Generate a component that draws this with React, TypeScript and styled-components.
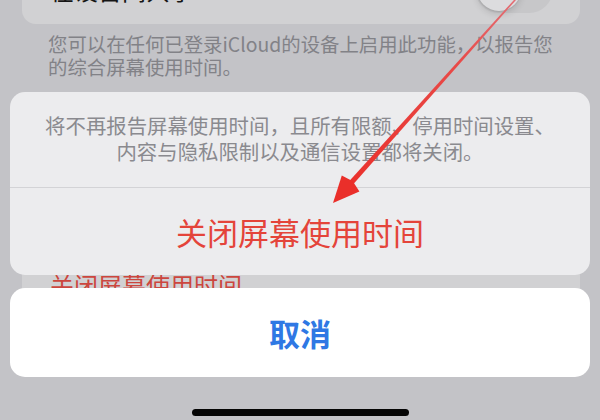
import React from "react";
import styled, { createGlobalStyle } from "styled-components";

const GlobalStyle = createGlobalStyle`
  html, body {
    margin: 0;
    padding: 0;
    width: 600px;
    height: 420px;
    overflow: hidden;
    background: #c3c3c7;
  }
  body {
    font-family: "Noto Sans CJK SC", "Noto Sans", sans-serif;
    -webkit-font-smoothing: antialiased;
  }
`;

const Screen = styled.div`
  position: relative;
  width: 600px;
  height: 420px;
  overflow: hidden;
  background: #c3c3c7;
`;

const Settings = styled.div`
  display: flex;
  flex-direction: column;
  padding: 0 20px 0 22px;
`;

const SettingsCard = styled.div<{ $offset: number; $height: number }>`
  display: flex;
  align-items: center;
  justify-content: space-between;
  box-sizing: border-box;
  height: ${(p) => p.$height}px;
  margin-top: ${(p) => p.$offset}px;
  padding: 0 27px 0 28px;
  background: #d1d1d3;
  border-radius: 14px;
`;

const RowTitle = styled.span<{ $danger?: boolean }>`
  font-size: 24px;
  line-height: 1;
  color: ${(p) => (p.$danger ? "#cc463e" : "#151515")};
`;

const Toggle = styled.div`
  align-self: flex-start;
  margin-top: 9px;
  display: flex;
  align-items: center;
  box-sizing: border-box;
  width: 78px;
  height: 48px;
  padding: 2px;
  border-radius: 24px;
  background: #c7c7c9;
`;

const Knob = styled.div`
  width: 44px;
  height: 44px;
  border-radius: 50%;
  background: #dcdcde;
  box-shadow: 0 0 0 1px rgba(0, 0, 0, 0.05), 0 3px 7px rgba(0, 0, 0, 0.14);
`;

const Footnote = styled.p`
  margin: 8px 0 0;
  padding-left: 26px;
  font-size: 19.4px;
  line-height: 23px;
  color: #828287;
`;

const Overlay = styled.div`
  position: absolute;
  inset: 0;
  display: flex;
  flex-direction: column;
  padding: 92px 10px 0;
`;

const ActionGroup = styled.div`
  display: flex;
  flex-direction: column;
  background: #ececee;
  border-radius: 15px;
  overflow: hidden;
`;

const Message = styled.div`
  display: flex;
  align-items: center;
  justify-content: center;
  box-sizing: border-box;
  height: 95px;
  padding-bottom: 4px;
  text-align: center;
  font-size: 20.4px;
  line-height: 26px;
  color: #8a8a8f;
`;

const ActionButton = styled.div`
  display: flex;
  align-items: center;
  justify-content: center;
  box-sizing: border-box;
  height: 88px;
  border-top: 1px solid #d3d3d6;
  font-size: 31px;
  color: #e4443a;
`;

const CancelButton = styled.div`
  display: flex;
  align-items: center;
  justify-content: center;
  margin-top: 13px;
  height: 89px;
  background: #ffffff;
  border-radius: 15px;
  font-size: 31px;
  font-weight: 700;
  color: #2f78e4;
`;

const HomeIndicator = styled.div`
  align-self: center;
  margin-top: 32px;
  width: 217px;
  height: 7px;
  border-radius: 4px;
  background: #050505;
`;

const Annotation = styled.svg`
  position: absolute;
  left: 0;
  top: 0;
  width: 600px;
  height: 420px;
  pointer-events: none;
`;

function Arrow() {
  return (
    <Annotation viewBox="0 0 600 420">
      <defs>
        <linearGradient id="arrowGrad" x1="522" y1="-8" x2="340" y2="195" gradientUnits="userSpaceOnUse">
          <stop offset="0" stopColor="#e2727a" />
          <stop offset="0.35" stopColor="#e84a48" />
          <stop offset="1" stopColor="#ea2f2a" />
        </linearGradient>
      </defs>
      <polygon
        points="522.2,-7.0 521.2,-8.0 348.2,182.2 352.6,185.0"
        fill="url(#arrowGrad)"
      />
      <polygon points="333,203 359.4,191.4 352.8,181.2 341.8,175.4" fill="#ea2f2a" />
    </Annotation>
  );
}

export default function App() {
  return (
    <>
      <GlobalStyle />
      <Screen>
        <Settings>
          <SettingsCard $offset={-44} $height={68}>
            <RowTitle>在设备间共享</RowTitle>
            <Toggle>
              <Knob />
            </Toggle>
          </SettingsCard>
          <Footnote>
            您可以在任何已登录iCloud的设备上启用此功能，以报告您
            <br />
            的综合屏幕使用时间。
          </Footnote>
          <SettingsCard $offset={177} $height={60}>
            <RowTitle $danger>关闭屏幕使用时间</RowTitle>
          </SettingsCard>
        </Settings>
        <Overlay>
          <ActionGroup>
            <Message>
              将不再报告屏幕使用时间，且所有限额、停用时间设置、
              <br />
              内容与隐私限制以及通信设置都将关闭。
            </Message>
            <ActionButton>关闭屏幕使用时间</ActionButton>
          </ActionGroup>
          <CancelButton>取消</CancelButton>
          <HomeIndicator />
        </Overlay>
        <Arrow />
      </Screen>
    </>
  );
}
